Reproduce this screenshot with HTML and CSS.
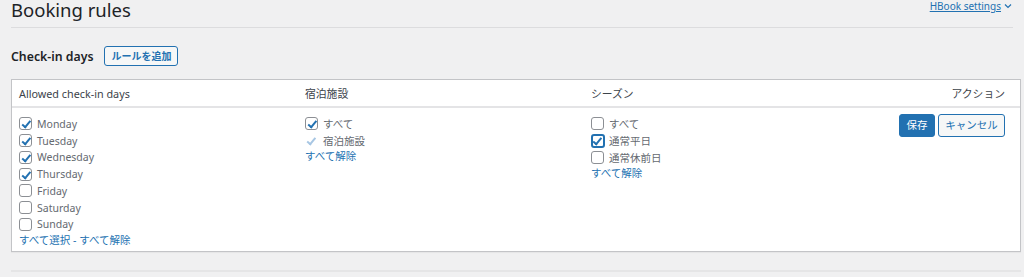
FILE: index.html
```html
<!DOCTYPE html>
<html lang="ja">
<head>
<meta charset="utf-8">
<link rel="stylesheet" href="styles.css">
</head>
<body>
<div class="wrap">
  <div class="topbar">
    <h1 class="title">Booking rules</h1>
    <a class="settings-link" href="#">HBook settings <svg class="chev" width="8" height="6" viewBox="0 0 8 6"><path d="M1 1.5 L4 4.5 L7 1.5" fill="none" stroke="#2271b1" stroke-width="1.2"/></svg></a>
  </div>
  <div class="section-head">
    <h2 class="section-title">Check-in days</h2>
    <button class="btn btn-secondary btn-add">ルールを追加</button>
  </div>
  <div class="rules-table">
    <div class="row head">
      <div class="cell">Allowed check-in days</div>
      <div class="cell">宿泊施設</div>
      <div class="cell">シーズン</div>
      <div class="cell cell-actions">アクション</div>
    </div>
    <div class="row body">
      <div class="cell">
        <ul class="checklist days">
          <li><span class="cb checked"></span>Monday</li>
          <li><span class="cb checked"></span>Tuesday</li>
          <li><span class="cb checked"></span>Wednesday</li>
          <li><span class="cb checked"></span>Thursday</li>
          <li><span class="cb"></span>Friday</li>
          <li><span class="cb"></span>Saturday</li>
          <li><span class="cb"></span>Sunday</li>
        </ul>
        <div class="links"><a href="#">すべて選択</a> - <a href="#">すべて解除</a></div>
      </div>
      <div class="cell">
        <ul class="checklist">
          <li><span class="cb checked"></span>すべて</li>
          <li><span class="cb checked disabled"></span>宿泊施設</li>
        </ul>
        <div class="links"><a href="#">すべて解除</a></div>
      </div>
      <div class="cell">
        <ul class="checklist">
          <li><span class="cb"></span>すべて</li>
          <li><span class="cb checked focus"></span>通常平日</li>
          <li><span class="cb"></span>通常休前日</li>
        </ul>
        <div class="links"><a href="#">すべて解除</a></div>
      </div>
      <div class="cell cell-actions">
        <div class="actions">
          <button class="btn btn-primary">保存</button>
          <button class="btn btn-secondary">キャンセル</button>
        </div>
      </div>
    </div>
  </div>
  <div class="footer-line"></div>
</div>
</body>
</html>
```

FILE: styles.css
```css
html, body {
  margin: 0;
  padding: 0;
  background: #f0f0f1;
}
body {
  font-family: "Noto Sans", "Noto Sans CJK JP", sans-serif;
  color: #3c434a;
  font-size: 10.5px;
}
.wrap {
  padding: 0 3px 0 11px;
}
.topbar {
  display: flex;
  justify-content: space-between;
  align-items: flex-start;
  margin-right: 8px;
  border-bottom: 1px solid #dcdcde;
  height: 27px;
}
.title {
  margin: 0;
  font-weight: 400;
  font-size: 18.5px;
  line-height: 19px;
  color: #1d2327;
}
.settings-link {
  color: #2271b1;
  font-size: 10px;
  line-height: 12px;
  text-decoration: underline;
  margin-top: 0;
  margin-right: 1px;
  display: flex;
  align-items: center;
  gap: 3px;
}
.chev { display: block; }
.section-head {
  display: flex;
  align-items: center;
  gap: 11px;
  margin-top: 18px;
  height: 20px;
}
.section-title {
  margin: 0;
  font-size: 12.3px;
  font-weight: 600;
  color: #1d2327;
}
.btn {
  font-family: "Noto Sans", "Noto Sans CJK JP", sans-serif;
  font-size: 10px;
  border-radius: 3px;
  border: 1px solid #2271b1;
  padding: 0 7px;
  cursor: pointer;
  line-height: 1;
}
.btn-secondary {
  background: #f6f7f7;
  color: #2271b1;
}
.btn-primary {
  background: #2271b1;
  color: #fff;
}
.btn-add {
  height: 20px;
  width: 74px;
  padding: 0;
  font-weight: 600;
}
.rules-table {
  margin-top: 13px;
  background: #fff;
  border: 1px solid #c3c4c7;
  height: 173px;
  box-sizing: border-box;
  box-shadow: 0 1px 1px rgba(0,0,0,0.04);
}
.row {
  display: grid;
  grid-template-columns: 286px 286px 286px 1fr;
}
.row.head {
  height: 28px;
  align-items: center;
  border-bottom: 2px solid #e4e4e6;
  box-sizing: border-box;
  color: #3c434a;
  font-size: 10.8px;
}
.cell {
  padding: 0 7px;
}
.cell-actions {
  text-align: right;
  padding-right: 15px;
}
.row.body .cell {
  padding-top: 7.5px;
}
.checklist {
  list-style: none;
  margin: 0;
  padding: 0;
}
.checklist li {
  display: flex;
  align-items: center;
  height: 16.75px;
  color: #646970;
}
.cb {
  width: 13px;
  height: 13px;
  box-sizing: border-box;
  border: 1px solid #8c8f94;
  border-radius: 3px;
  margin-right: 5px;
  position: relative;
  flex: none;
  background: #fff;
}
.cb.checked::after {
  content: "";
  position: absolute;
  left: 3.5px;
  top: 1px;
  width: 3px;
  height: 6.5px;
  border: solid #2271b1;
  border-width: 0 2px 2px 0;
  transform: rotate(40deg);
}
.cb.disabled {
  border-color: transparent;
}
.cb.disabled::after {
  border-color: #a7c6e3;
  left: 2.5px;
}
.cb.focus {
  border: 2px solid #2271b1;
  width: 14px;
  height: 14px;
  margin-left: -0.5px;
  margin-right: 4.5px;
}
.cb.focus::after {
  left: 2.5px;
  top: 0;
}
.links {
  line-height: 15px;
  color: #2271b1;
}
.links a {
  color: #2271b1;
  text-decoration: none;
}
.actions {
  display: flex;
  justify-content: flex-end;
  gap: 3px;
  margin-top: -1.5px;
}
.actions .btn {
  height: 23px;
  font-size: 10.5px;
}
.actions .btn-primary { width: 36px; padding: 0; }
.actions .btn-secondary { width: 67px; padding: 0; }
.footer-line {
  margin-top: 18px;
  height: 2px;
  background: #e5e5e6;
}
```
